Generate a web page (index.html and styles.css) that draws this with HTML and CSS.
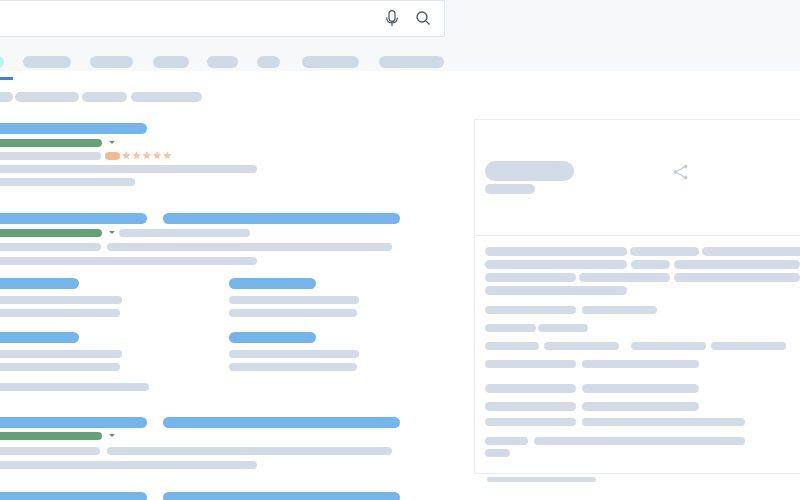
FILE: index.html
```html
<!DOCTYPE html>
<html lang="en">
<head>
<meta charset="utf-8">
<title>Search results skeleton</title>
<link rel="stylesheet" href="styles.css">
</head>
<body>
<div class="page">
  <header class="header">
    <div class="searchbox">
      <svg class="mic" viewBox="0 0 12 16" aria-hidden="true"><rect x="3" y="0.6" width="6" height="10.8" rx="3"/><path d="M0.7 7.6c0 3.2 2.2 5.3 5.3 5.3s5.300-2.100 5.300-5.300M6 12.900V16"/></svg>
      <svg class="lens" viewBox="0 0 14 14" aria-hidden="true"><circle cx="6" cy="6" r="5"/><path d="M9.600 9.600L13.500 13.500"/></svg>
    </div>
    <nav class="tabs">
      <span class="tab-dot"></span>
      <span class="tab w48 g19"></span>
      <span class="tab w43 g19"></span>
      <span class="tab w36 g20"></span>
      <span class="tab w31 g18"></span>
      <span class="tab w23 g19"></span>
      <span class="tab w57 g22"></span>
      <span class="tab w65 g20"></span>
    </nav>
  </header>

  <main class="main">
    <section class="results">
      <div class="tab-active"></div>
      <div class="row chips">
        <span class="p h10 w53"></span><span class="p h10 w64 g2"></span><span class="p h10 w45 g3"></span><span class="p h10 w71 g4"></span>
      </div>

      <article class="result first">
        <div class="row"><span class="p t w187"></span></div>
        <div class="row m5"><span class="p green"></span><span class="caret"></span></div>
        <div class="row m5"><span class="p h8 w141"></span><span class="p h8 orange g4"></span>
          <svg class="stars" viewBox="0 0 50 9" aria-hidden="true">
            <polygon points="4.300,0 5.500,3 8.600,3.200 6.200,5.200 7,8.300 4.300,6.600 1.600,8.300 2.400,5.200 0,3.200 3.100,3"/>
            <polygon points="14.500,0 15.700,3 18.800,3.200 16.400,5.200 17.200,8.300 14.500,6.600 11.800,8.300 12.600,5.200 10.200,3.200 13.300,3"/>
            <polygon points="24.800,0 26,3 29.100,3.200 26.700,5.200 27.500,8.300 24.800,6.600 22.100,8.300 22.900,5.200 20.500,3.200 23.600,3"/>
            <polygon points="35,0 36.200,3 39.300,3.200 36.900,5.200 37.700,8.300 35,6.600 32.300,8.300 33.100,5.200 30.700,3.200 33.800,3"/>
            <polygon points="45.300,0 46.500,3 49.600,3.200 47.200,5.200 48,8.300 45.300,6.600 42.600,8.300 43.400,5.200 41,3.200 44.100,3"/>
          </svg>
        </div>
        <div class="row m5"><span class="p h8 w297"></span></div>
        <div class="row m5"><span class="p h8 w175"></span></div>
      </article>

      <article class="result second">
        <div class="row"><span class="p t w187"></span><span class="p t w237 g16"></span></div>
        <div class="row m5"><span class="p green"></span><span class="caret"></span><span class="p h8 w131 g4"></span></div>
        <div class="row m6"><span class="p h8 w141"></span><span class="p h8 w285 g6"></span></div>
        <div class="row m6"><span class="p h8 w297"></span></div>
        <div class="sitelinks">
          <div class="sitelink">
            <span class="p t w119"></span>
            <span class="p h8 w162 m7"></span>
            <span class="p h8 w160 m5"></span>
          </div>
          <div class="sitelink">
            <span class="p t w87"></span>
            <span class="p h8 w130 m7"></span>
            <span class="p h8 w128 m5"></span>
          </div>
          <div class="sitelink">
            <span class="p t w119"></span>
            <span class="p h8 w162 m7"></span>
            <span class="p h8 w160 m5"></span>
          </div>
          <div class="sitelink">
            <span class="p t w87"></span>
            <span class="p h8 w130 m7"></span>
            <span class="p h8 w128 m5"></span>
          </div>
        </div>
        <div class="row m12"><span class="p h8 w189"></span></div>
      </article>

      <article class="result third">
        <div class="row"><span class="p t w187"></span><span class="p t w237 g16"></span></div>
        <div class="row m4"><span class="p green"></span><span class="caret"></span></div>
        <div class="row m7"><span class="p h8 w140"></span><span class="p h8 w285 g7"></span></div>
        <div class="row m6"><span class="p h8 w297"></span></div>
      </article>

      <article class="result fourth">
        <div class="row"><span class="p t w187"></span><span class="p t w237 g16"></span></div>
      </article>
    </section>

    <aside class="side">
      <div class="panel">
        <div class="panel-head">
          <div class="panel-title">
            <span class="p heading"></span>
            <span class="p h10 w50 m3"></span>
          </div>
          <svg class="share" viewBox="0 0 16 16" aria-hidden="true">
            <path d="M12.500 2.500L2.500 8L12.500 13.500"/>
            <circle cx="12.500" cy="2.500" r="2"/><circle cx="2.500" cy="8" r="2"/><circle cx="12.500" cy="13.500" r="2"/>
          </svg>
        </div>
        <div class="panel-body">
          <div class="row"><span class="p h9 w142"></span><span class="p h9 w69 g3"></span><span class="p h9 w126 g3"></span></div>
          <div class="row m4"><span class="p h9 w142"></span><span class="p h9 w39 g4"></span><span class="p h9 w126 g4"></span></div>
          <div class="row m4"><span class="p h9 w91"></span><span class="p h9 w91 g3"></span><span class="p h9 w126 g4"></span></div>
          <div class="row m4"><span class="p h9 w142"></span></div>
          <div class="row m11"><span class="p h8 w91"></span><span class="p h8 w75 g6"></span></div>
          <div class="row m10"><span class="p h8 w51"></span><span class="p h8 w50 g2"></span></div>
          <div class="row m10"><span class="p h8 w54"></span><span class="p h8 w75 g5"></span><span class="p h8 w75 g12"></span><span class="p h8 w75 g5"></span></div>
          <div class="row m10"><span class="p h8 w91"></span><span class="p h8 w117 g6"></span></div>
          <div class="row m16"><span class="p h9 w91"></span><span class="p h9 w117 g6"></span></div>
          <div class="row m9"><span class="p h9 w91"></span><span class="p h9 w117 g6"></span></div>
          <div class="row m7"><span class="p h8 w91"></span><span class="p h8 w163 g6"></span></div>
          <div class="row m11"><span class="p h8 w43"></span><span class="p h8 w211 g6"></span></div>
          <div class="row m4"><span class="p h8 w25"></span></div>
        </div>
      </div>
      <div class="panel-foot"></div>
    </aside>
  </main>
</div>
</body>
</html>
```
FILE: styles.css
```css
html, body {
  margin: 0;
  padding: 0;
  width: 800px;
  height: 500px;
  overflow: hidden;
  background: #fff;
  font-family: "Liberation Sans", sans-serif;
}

.page {
  width: 840px;
  margin-left: -40px;
}

/* Header */
.header {
  height: 71px;
  background: #f6f8fa;
  box-sizing: border-box;
}

.searchbox {
  width: 485px;
  height: 37px;
  box-sizing: border-box;
  background: #fff;
  border: 1px solid #e0e4ea;
  border-left: 0;
  padding: 0 14px 1px 0;
  display: flex;
  justify-content: flex-end;
  align-items: center;
  gap: 18px;
}

.mic {
  width: 12px;
  height: 16px;
  fill: none;
  stroke: #4a5361;
  stroke-width: 1.2;
}

.lens {
  width: 14px;
  height: 14px;
  fill: none;
  stroke: #4a5361;
  stroke-width: 1.300;
}

.tabs {
  display: flex;
  margin: 19px 0 0 32px;
}

.tab-dot {
  width: 12px;
  height: 12px;
  border-radius: 50%;
  background: #b8f5ea;
}

.tab {
  height: 12px;
  border-radius: 6px;
  background: #d0dae5;
}

.tab-active {
  width: 53px;
  height: 3px;
  margin-top: 6px;
  background: #3a80de;
}

/* Layout */
.main {
  display: flex;
  align-items: flex-start;
}

.results {
  width: 514px;
  flex: none;
}

.side {
  width: 326px;
  flex: none;
  margin-top: 48px;
}

/* Skeleton pieces */
.row {
  display: flex;
  align-items: flex-start;
}

.p {
  display: block;
  flex: none;
  border-radius: 99px;
  background: #d2dbe6;
}

.t {
  height: 11px;
  background: #74b5ec;
}

.green {
  width: 142px;
  height: 8px;
  background: #64a078;
}

.orange {
  width: 15px;
  background: #f1ba8e;
}

.caret {
  flex: none;
  width: 0;
  height: 0;
  margin: 2px 0 0 7px;
  border-left: 3px solid transparent;
  border-right: 3px solid transparent;
  border-top: 3px solid #6f8c80;
}

.stars {
  flex: none;
  width: 50px;
  height: 9px;
  margin: -1px 0 0 2px;
  fill: #f1c6a6;
}

.chips { margin-top: 12px; }

.first { margin-top: 21px; }
.second { margin-top: 27px; }
.third { margin-top: 26px; }
.fourth { margin-top: 23px; }

.sitelinks {
  display: grid;
  grid-template-columns: 269px auto;
  row-gap: 15px;
  margin-top: 13px;
}

/* Knowledge panel */
.panel {
  height: 355px;
  box-sizing: border-box;
  border: 1px solid #e8ebf3;
  border-right: 0;
}

.panel-head {
  height: 116px;
  box-sizing: border-box;
  border-bottom: 1px solid #e8ebf3;
  padding: 41px 0 0 10px;
  display: flex;
  align-items: flex-start;
}

.panel-title {
  width: 188px;
  flex: none;
}

.heading {
  width: 89px;
  height: 20px;
  border-radius: 10px;
}

.share {
  width: 16px;
  height: 16px;
  margin-top: 3px;
  flex: none;
  fill: #c6d0dc;
}

.share path {
  fill: none;
  stroke: #c6d0dc;
  stroke-width: 1.400;
}

.panel-body {
  padding: 11px 0 0 10px;
}

.panel-foot {
  width: 109px;
  height: 5px;
  margin: 3px 0 0 13px;
  border-radius: 3px;
  background: #d2dbe6;
}

/* Sizes */
.h8 { height: 8px; }
.h9 { height: 9px; }
.h10 { height: 10px; }

.w23 { width: 23px; }
.w25 { width: 25px; }
.w31 { width: 31px; }
.w36 { width: 36px; }
.w39 { width: 39px; }
.w43 { width: 43px; }
.w45 { width: 45px; }
.w48 { width: 48px; }
.w50 { width: 50px; }
.w51 { width: 51px; }
.w53 { width: 53px; }
.w54 { width: 54px; }
.w57 { width: 57px; }
.w64 { width: 64px; }
.w65 { width: 65px; }
.w69 { width: 69px; }
.w71 { width: 71px; }
.w75 { width: 75px; }
.w87 { width: 87px; }
.w91 { width: 91px; }
.w117 { width: 117px; }
.w119 { width: 119px; }
.w126 { width: 126px; }
.w128 { width: 128px; }
.w130 { width: 130px; }
.w131 { width: 131px; }
.w140 { width: 140px; }
.w141 { width: 141px; }
.w142 { width: 142px; }
.w160 { width: 160px; }
.w162 { width: 162px; }
.w163 { width: 163px; }
.w175 { width: 175px; }
.w187 { width: 187px; }
.w189 { width: 189px; }
.w211 { width: 211px; }
.w237 { width: 237px; }
.w285 { width: 285px; }
.w297 { width: 297px; }

/* Horizontal spacing */
.g2 { margin-left: 2px; }
.g3 { margin-left: 3px; }
.g4 { margin-left: 4px; }
.g5 { margin-left: 5px; }
.g6 { margin-left: 6px; }
.g7 { margin-left: 7px; }
.g12 { margin-left: 12px; }
.g16 { margin-left: 16px; }
.g18 { margin-left: 18px; }
.g19 { margin-left: 19px; }
.g20 { margin-left: 20px; }
.g22 { margin-left: 22px; }

/* Vertical spacing */
.m3 { margin-top: 3px; }
.m4 { margin-top: 4px; }
.m5 { margin-top: 5px; }
.m6 { margin-top: 6px; }
.m7 { margin-top: 7px; }
.m9 { margin-top: 9px; }
.m10 { margin-top: 10px; }
.m11 { margin-top: 11px; }
.m12 { margin-top: 12px; }
.m16 { margin-top: 16px; }
```
